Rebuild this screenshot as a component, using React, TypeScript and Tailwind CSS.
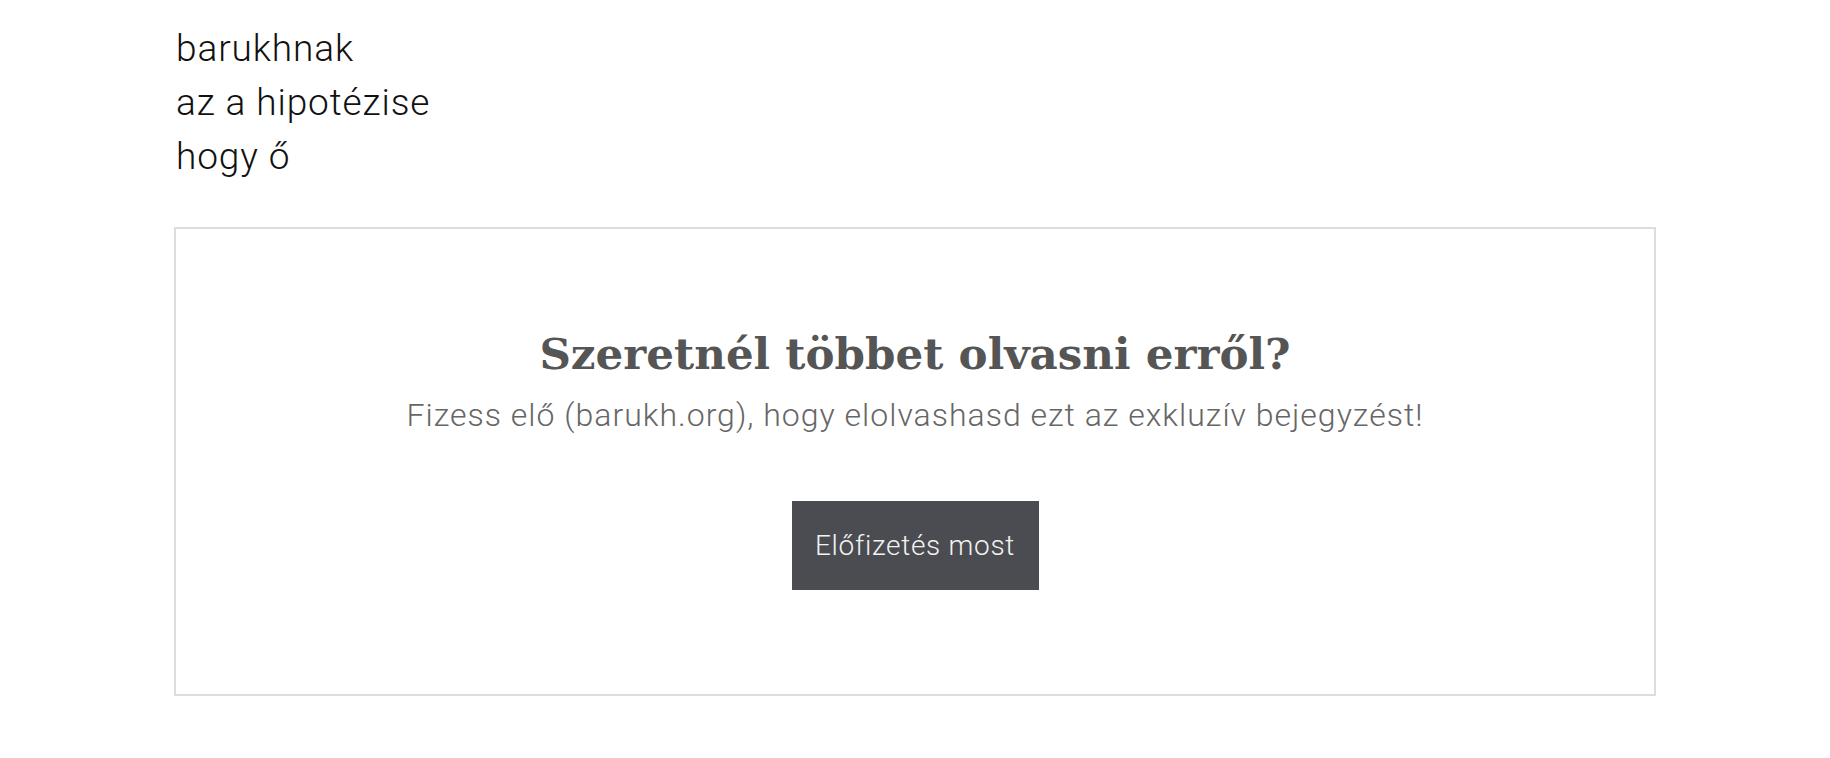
export default function App() {
  return (
    <div className="min-h-screen bg-white font-['Roboto',sans-serif]">
      <div className="mx-auto w-[1482px] pt-[22px]">
        <p className="pl-[2px] text-[37px] font-light leading-[54px] tracking-[0.9px] text-[#111]">
          barukhnak
          <br />
          az a hipotézise
          <br />
          hogy ő
        </p>

        <div className="mt-[43px] flex h-[469px] flex-col items-center border-2 border-[#dddddd] pt-[97px]">
          <h2 className="font-['DejaVu_Serif',serif] text-[43.6px] font-bold leading-[56px] text-[#555555]">
            Szeretnél többet olvasni erről?
          </h2>
          <p className="mt-[10px] text-[32px] font-light leading-[46px] tracking-[1px] text-[#666666]">
            Fizess elő (barukh.org), hogy elolvashasd ezt az exkluzív bejegyzést!
          </p>
          <a
            href="#"
            className="mt-[63px] flex h-[89px] w-[247px] items-center justify-center bg-[#4b4c51] text-[28px] font-light tracking-[0.7px] text-[#f2f2f2]"
          >
            Előfizetés most
          </a>
        </div>
      </div>
    </div>
  );
}
